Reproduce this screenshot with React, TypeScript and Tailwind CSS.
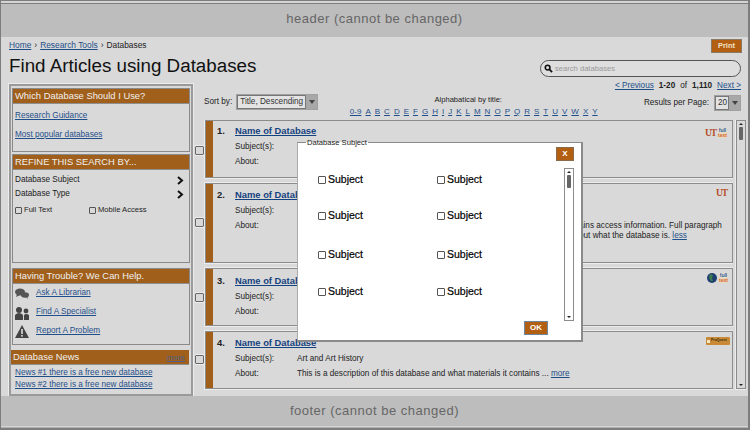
import React from "react";

const font = { fontFamily: '"Liberation Sans", Arial, sans-serif' };

function Ut() {
  return <span className="font-['Liberation_Serif'] text-[9.5px] leading-[10px] font-bold text-[#b5502a] tracking-[-1px] w-[11px]">UT</span>;
}
function FullText() {
  return (
    <div className="w-[9px] h-[10px] bg-[#e6dcc4] flex flex-col items-center font-bold leading-[5px] text-[5px]">
      <span className="text-[#2f62a8]">full</span>
      <span className="text-[#d9652b]">text</span>
    </div>
  );
}
function Globe() {
  return (
    <svg width="10" height="10" viewBox="0 0 10 10">
      <circle cx="5" cy="5" r="5" fill="#1f3f73" />
      <path d="M3 1 L6 2 L5 5 L6 8 L4 8 L2 5 Z" fill="#3f7a4c" />
    </svg>
  );
}
function Proquest() {
  return (
    <div className="w-[24px] h-[8px] bg-[#c98a35] rounded-[1px] flex items-center pl-[1px] gap-[1px]">
      <span className="w-[3px] h-[3px] bg-[#f5e6c0]" />
      <span className="text-[3.5px] leading-none text-[#3a2a10] font-bold">ProQuest</span>
    </div>
  );
}
function Box({ className = "" }: { className?: string }) {
  return <span className={`inline-block shrink-0 border border-[#555] rounded-[1px] ${className}`} />;
}
function Arrow() {
  return <span className="w-0 h-0 border-x-[3px] border-x-transparent border-t-[4px] border-t-[#444]" />;
}
function Select({ text, w }: { text: string; w: string }) {
  return (
    <div className={`${w} h-[16px] flex border border-[#a0a0a0] bg-[#e3e3e3] text-[8.2px] leading-[12px] text-[#333] whitespace-nowrap`}>
      <span className="flex-1 min-w-0 pl-[2px] border border-[#777]">{text}</span>
      <span className="w-[11px] shrink-0 bg-[#a8a8a8] flex items-center justify-center"><Arrow /></span>
    </div>
  );
}
function Scroll({ className = "" }: { className?: string }) {
  return (
    <div className={`w-[10px] shrink-0 border border-[#8c8c8c] flex flex-col items-center ${className}`}>
      <span className="mt-[2px] w-0 h-0 border-x-[2px] border-x-transparent border-b-[2px] border-b-[#222]" />
      <span className="mt-[2px] w-[4px] h-[13px] bg-[#666] rounded-[1px]" />
      <span className="mt-auto mb-[2px] w-0 h-0 border-x-[2px] border-x-transparent border-t-[2px] border-t-[#222]" />
    </div>
  );
}
function A({ children, className = "" }: { children: React.ReactNode; className?: string }) {
  return <a className={`text-[#1f4f8a] underline whitespace-nowrap ${className}`}>{children}</a>;
}
function Heading({ children, extra }: { children: React.ReactNode; extra?: React.ReactNode }) {
  return (
    <div className="h-[15px] shrink-0 bg-[#a05f1a] border-b border-[#8f8f8f] text-[#f0f0f0] text-[9.4px] leading-[14px] px-[2px] flex justify-between">
      <span>{children}</span>
      {extra}
    </div>
  );
}
function Panel({ title, h, children }: { title: string; h: string; children: React.ReactNode }) {
  return (
    <div className={`${h} shrink-0 border border-[#8a8a8a] flex flex-col`}>
      <Heading>{title}</Heading>
      {children}
    </div>
  );
}
function Chevron() {
  return <svg width="7" height="9" viewBox="0 0 7 9"><path d="M1 1 L5 4.5 L1 8" fill="none" stroke="#111" strokeWidth="2" /></svg>;
}
function Item({ n, h, pt, icons, iconPos, about, subject, chk }: { n: number; h: string; pt: string; icons: React.ReactNode; iconPos: string; about?: React.ReactNode; subject?: string; chk: string }) {
  return (
    <div className={`flex shrink-0 ${h}`}>
      <div className={`w-[10px] shrink-0 flex items-start ${chk}`}><Box className="w-[9px] h-[9px] border-[#666] outline outline-1 outline-[#eee]" /></div>
      <div className="flex-1 flex border border-[#8c8c8c] outline outline-1 outline-[#ececec] relative">
        <div className="w-[7px] bg-[#a05f1a]" />
        <div className={`flex-1 pl-[4px] ${pt} text-[8.2px] text-[#222]`}>
          <div className="flex items-baseline h-[12px]">
            <span className="w-[18px] text-[9.4px] font-bold">{n}.</span>
            <A className="text-[9.4px] font-bold text-[#14427f]">Name of Database</A>
          </div>
          <div className="flex mt-[3px] h-[15px] leading-[15px]">
            <span className="w-[62px] ml-[18px]">Subject(s):</span>
            <span>{subject}</span>
          </div>
          <div className="flex leading-[15px]">
            <span className="w-[62px] ml-[18px]">About:</span>
            <span className="flex-1 whitespace-nowrap">{about}</span>
          </div>
        </div>
        <div className={`absolute flex items-center gap-[2px] ${iconPos}`}>{icons}</div>
      </div>
    </div>
  );
}

const letters = ["0-9","A","B","C","D","E","F","G","H","I","J","K","L","M","N","O","P","Q","R","S","T","U","V","W","X","Y"];
const rows = ["mt-[24px]", "mt-[19px]", "mt-[22px]", "mt-[20px]"];

export default function App() {
  return (
    <div style={font} className="w-[750px] h-[430px] relative overflow-hidden bg-[#d9d9d9] border-l border-r-2 border-[#7d7d7d] flex flex-col text-[#222]">
      <div className="h-[37px] shrink-0 bg-[#bdbdbd] flex flex-col">
        <div className="h-[4px] shrink-0 bg-[#d4d4d4] border-y border-[#7d7d7d]" />
        <div className="flex-1 flex items-center justify-center pb-[4px] text-[13px] text-[#666] tracking-[0.5px]">
          header (cannot be changed)
        </div>
      </div>

      <div className="flex-1 min-h-0 flex flex-col">
        <div className="h-[43px] shrink-0 flex justify-between pl-[8px] pr-[6px]">
          <div>
            <div className="mt-[2px] h-[12px] text-[8.4px] leading-[12px] flex items-center gap-[3px]">
              <A>Home</A><span>›</span><A>Research Tools</A><span>›</span><span>Databases</span>
            </div>
            <h1 className="text-[18.8px] leading-[24px] mt-[3px] text-[#111]">Find Articles using Databases</h1>
          </div>
          <div className="flex flex-col items-end">
            <div className="mt-[2px] w-[31px] h-[14px] bg-[#b35f12] border border-[#8a7a65] text-[#f0e0c8] text-[7.5px] font-bold leading-[12px] text-center">Print</div>
            <div className="mt-[7px] mr-[1px] w-[201px] h-[17px] rounded-full bg-[#dedede] border border-[#555] flex items-center pl-[3px] gap-[2px] text-[7.6px] text-[#999]">
              <svg width="9" height="9" viewBox="0 0 10 10"><circle cx="4" cy="4" r="2.6" fill="none" stroke="#111" strokeWidth="1.8" /><path d="M6 6 L9 9" stroke="#111" strokeWidth="2" /></svg>
              search databases
            </div>
          </div>
        </div>

        <div className="flex-1 min-h-0 flex pl-[8px]">
          <div className="w-[184px] shrink-0 mt-[4px] border-2 border-[#9a9a9a] outline outline-1 outline-[#ececec] px-[1px] pt-[2px] flex flex-col text-[8.2px]">
            <Panel title="Which Database Should I Use?" h="h-[64px]">
              <div className="pl-[2px] pt-[6px] flex flex-col items-start gap-[8px] leading-[11px]">
                <A>Research Guidance</A>
                <A>Most popular databases</A>
              </div>
            </Panel>
            <div className="h-[2px] shrink-0" />
            <Panel title="REFINE THIS SEARCH BY..." h="h-[109px]">
              <div className="pl-[2px] pr-[5px] pt-[3px] text-[#222]">
                <div className="flex justify-between items-center h-[14px]"><span>Database Subject</span><Chevron /></div>
                <div className="flex justify-between items-center h-[15px]"><span>Database Type</span><Chevron /></div>
                <div className="flex mt-[2px] h-[12px] items-center text-[7.6px] gap-[2px]">
                  <Box className="w-[7px] h-[7px]" /><span className="w-[63px]">Full Text</span>
                  <Box className="w-[7px] h-[7px]" /><span>Mobile Access</span>
                </div>
              </div>
            </Panel>
            <div className="h-[5px] shrink-0" />
            <Panel title="Having Trouble? We Can Help." h="h-[77px]">
              <div className="pl-[2px] pt-[2px] flex flex-col gap-[4px]">
                <div className="h-[15px] flex items-center gap-[7px]">
                  <svg width="14" height="13" viewBox="0 0 14 13" fill="#555"><ellipse cx="5" cy="5" rx="5" ry="3.4" /><ellipse cx="10" cy="8" rx="4" ry="2.8" /><path d="M2 7 L1 10 L5 8Z" /><path d="M11 10 L13 12 L12 9Z" /></svg>
                  <A>Ask A Librarian</A>
                </div>
                <div className="h-[15px] flex items-center gap-[7px]">
                  <svg width="14" height="14" viewBox="0 0 14 14" fill="#444"><circle cx="4" cy="4" r="3" /><path d="M0 14 V9 Q4 5 8 9 V14Z" /><circle cx="11" cy="5" r="2.4" /><path d="M9 14 V9 Q11 7 14 9 V14Z" /></svg>
                  <A>Find A Specialist</A>
                </div>
                <div className="h-[15px] flex items-center gap-[7px]">
                  <svg width="14" height="13" viewBox="0 0 14 13"><path d="M7 0 L14 13 H0Z" fill="#444" /><rect x="6.2" y="4" width="1.6" height="5" fill="#ddd" /><rect x="6.2" y="10" width="1.6" height="1.6" fill="#ddd" /></svg>
                  <A>Report A Problem</A>
                </div>
              </div>
            </Panel>
            <div className="h-[5px] shrink-0" />
            <div className="ml-[-1px] mr-[1px]"><Heading extra={<a className="text-[#4a5f8a] underline text-[8px] leading-[16px] mr-[2px]">more</a>}>Database News</Heading></div>
            <div className="pl-[3px] pt-[2px] leading-[12px] flex flex-col items-start">
              <A>News #1 there is a free new database</A>
              <A>News #2 there is a free new database</A>
            </div>
          </div>

          <div className="flex-1 min-w-0 flex flex-col pl-[2px] pr-[2px]">
            <div className="h-[40px] shrink-0 flex">
              <div className="ml-[9px] mt-[14px] flex items-start gap-[4px] text-[8.2px] leading-[16px]">
                <span>Sort by:</span><Select text="Title, Descending" w="w-[82px]" />
              </div>
              <div className="w-[247px] flex flex-col items-center ml-[32px] mt-[15px] text-[7.6px]">
                <span className="leading-[10px] mr-[11px]">Alphabatical by title:</span>
                <div className="mt-[2px] flex gap-[4px] text-[8px] leading-[10px]">
                  {letters.map((l) => <A key={l}>{l}</A>)}
                </div>
              </div>
              <div className="flex-1 flex flex-col items-end pr-[5px] text-[8.2px] whitespace-nowrap">
                <div className="h-[12px] leading-[12px] flex gap-[5px]">
                  <A>&lt; Previous</A><b>1-20</b><span>of</span><b>1,110</b><A>Next &gt;</A>
                </div>
                <div className="mt-[3px] flex items-center gap-[5px]"><span>Results per Page:</span><Select text="20" w="w-[27px]" /></div>
              </div>
            </div>
            <div className="flex-1 min-h-0 flex gap-[3px] overflow-hidden">
              <div className="flex-1 min-w-0 flex flex-col gap-[5px] overflow-hidden">
                <Item n={1} h="h-[58px]" pt="pt-[3px]" chk="pt-[26px]" iconPos="right-[5px] top-[7px]" icons={<><Ut /><FullText /></>} />
                <Item n={2} h="h-[80px]" pt="pt-[4px]" chk="pt-[35px]" iconPos="right-[5px] top-[4px]"
                  about={<div className="pl-[282px] leading-[10px] pt-[2.5px]">
                    <div className="h-[10px]">ains access information. Full paragraph</div>
                    <div className="h-[10px]">out what the database is. <A>less</A></div>
                  </div>}
                  icons={<Ut />} />
                <Item n={3} h="h-[58px]" pt="pt-[5px]" chk="pt-[25px]" iconPos="right-[4px] top-[4px]" icons={<><Globe /><FullText /></>} />
                <Item n={4} h="h-[58px]" pt="pt-[4px]" chk="pt-[24px]" iconPos="right-[2px] top-[5px]" subject="Art and Art History"
                  about={<>This is a description of this database and what materials it contains ... <A>more</A></>}
                  icons={<Proquest />} />
              </div>
              <Scroll className="h-[269px] bg-[#d9d9d9] outline outline-1 outline-[#ececec]" />
            </div>
          </div>
        </div>
      </div>

      <div className="h-[34px] shrink-0 bg-[#bdbdbd] flex flex-col">
        <div className="flex-1 flex items-center justify-center text-[13px] text-[#666] tracking-[0.5px]">
          footer (cannot be changed)
        </div>
        <div className="h-[4px] shrink-0 bg-[#b0b0b0] border-t border-[#d4d4d4] border-b-2 border-b-[#7d7d7d]" />
      </div>

      <fieldset className="absolute left-[296px] top-[138px] w-[283px] h-[204px] bg-white border-t border-l border-l-[#aaa] border-t-[#8a8a8a] border-r-2 border-b-2 border-r-[#8a8a8a] border-b-[#8a8a8a] flex">
        <legend className="ml-[8px] px-[1px] h-[9px] text-[7.6px] leading-[9px] text-[#222]">Database Subject</legend>
        <div className="flex-1 flex flex-col pl-[20px]">
          {rows.map((m) => (
            <div key={m} className={`flex ${m}`}>
              {[0, 1].map((j) => (
                <div key={j} className="w-[119px] h-[17px] flex items-center gap-[2px] text-[10.5px] text-black [-webkit-text-stroke:0.2px_#000]">
                  <Box className="w-[8px] h-[8px] border-[#444]" />Subject
                </div>
              ))}
            </div>
          ))}
        </div>
        <div className="flex flex-col items-end pr-[7px]">
          <div className="w-[18px] h-[14px] bg-[#b35f12] border border-[#8a6a4a] text-white text-[8px] font-bold text-center leading-[12px]">X</div>
          <Scroll className="mt-[7px] h-[153px] bg-white" />
        </div>
        <div className="absolute left-[226px] top-[174px] w-[24px] h-[14px] bg-[#b35f12] border border-[#6d86a0] text-white text-[8px] font-bold text-center leading-[12px]">OK</div>
      </fieldset>
    </div>
  );
}
